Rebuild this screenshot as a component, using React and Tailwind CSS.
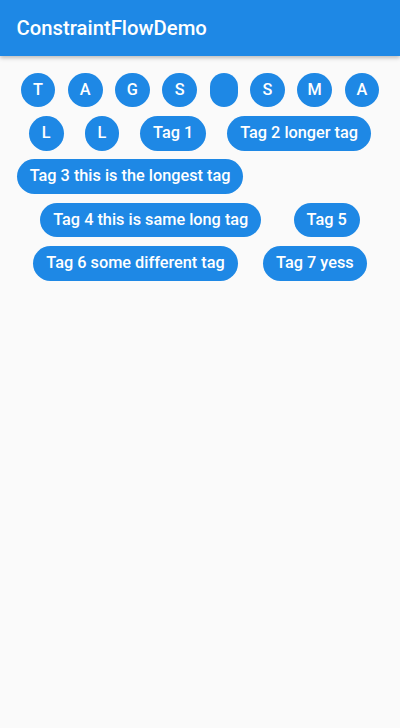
const rows = [
  { justify: "justify-evenly", items: ["T", "A", "G", "S", "", "S", "M", "A"] },
  { justify: "justify-evenly", items: ["L", "L", "Tag 1", "Tag 2 longer tag"] },
  { justify: "justify-start pl-[8.7px]", items: ["Tag 3 this is the longest tag"] },
  { justify: "justify-evenly", items: ["Tag 4 this is same long tag", "Tag 5"] },
  { justify: "justify-evenly", items: ["Tag 6 some different tag", "Tag 7 yess"] },
];

function Tag({ label }) {
  if (label === "") {
    return <div className="h-[34.7px] w-[28px] rounded-full bg-[#1e88e5]" />;
  }
  if (label.length === 1) {
    return (
      <div className="h-[34.7px] w-[34.7px] rounded-full bg-[#1e88e5] flex items-center justify-center text-white text-[16.3px] font-medium">
        {label}
      </div>
    );
  }
  return (
    <div className="h-[34.7px] px-[13px] rounded-full bg-[#1e88e5] flex items-center text-white text-[16.3px] font-medium whitespace-nowrap">
      {label}
    </div>
  );
}

export default function App() {
  return (
    <div
      className="min-h-[728px] bg-[#fafafa] flex flex-col"
      style={{ fontFamily: "Roboto, 'Liberation Sans', sans-serif" }}
    >
      <header className="h-[56px] bg-[#1e88e5] flex items-center pl-[16.5px] shadow-[0_2px_4px_rgba(0,0,0,0.25)]">
        <h1 className="text-white text-[20.3px] font-medium">ConstraintFlowDemo</h1>
      </header>

      <main className="px-2 pt-[16.7px] flex flex-col gap-[8.6px]">
        {rows.map((row, i) => (
          <div key={i} className={`flex ${row.justify}`}>
            {row.items.map((label, j) => (
              <Tag key={j} label={label} />
            ))}
          </div>
        ))}
      </main>
    </div>
  );
}
